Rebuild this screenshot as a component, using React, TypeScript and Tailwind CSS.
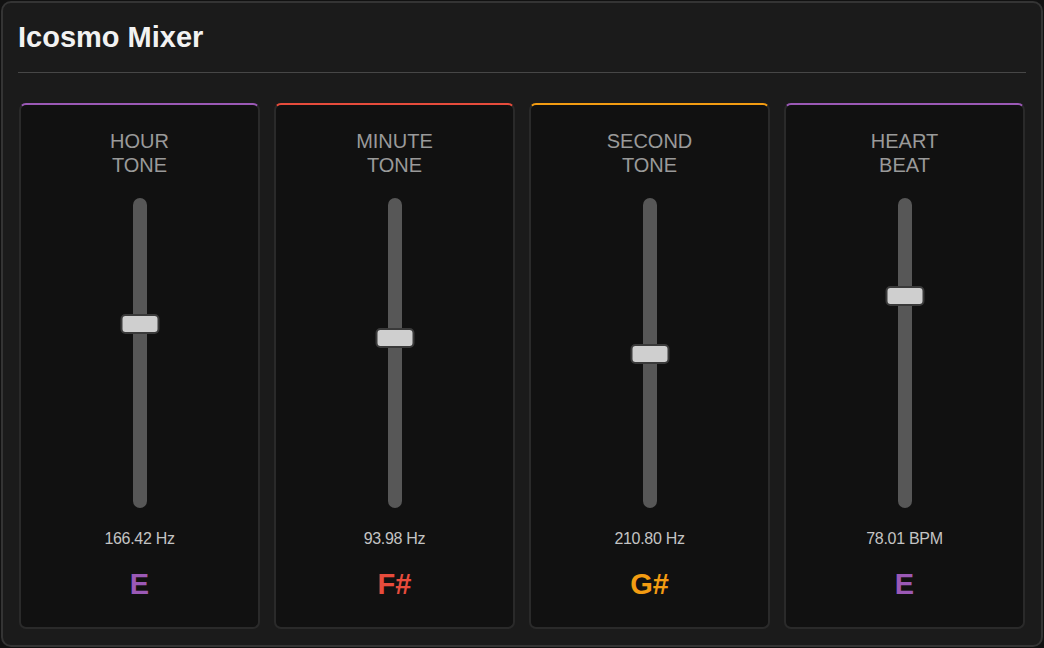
import React from 'react';

type Channel = {
  label: [string, string];
  value: string;
  note: string;
  color: string;
  accent: string;
  pos: number; // thumb offset from the top of the track, px
};

const channels: Channel[] = [
  { label: ['HOUR', 'TONE'], value: '166.42 Hz', note: 'E', color: 'text-[#9b59b6]', accent: 'border-t-[#9b59b6]', pos: 116 },
  { label: ['MINUTE', 'TONE'], value: '93.98 Hz', note: 'F#', color: 'text-[#e74c3c]', accent: 'border-t-[#e74c3c]', pos: 130 },
  { label: ['SECOND', 'TONE'], value: '210.80 Hz', note: 'G#', color: 'text-[#f39c12]', accent: 'border-t-[#f39c12]', pos: 146 },
  { label: ['HEART', 'BEAT'], value: '78.01 BPM', note: 'E', color: 'text-[#9b59b6]', accent: 'border-t-[#9b59b6]', pos: 88 },
];

function Fader({ pos }: { pos: number }) {
  return (
    <div className="relative mx-auto h-[310px] w-[14px] rounded-full bg-[#575757]">
      {/* thumb floats over the track */}
      <div
        className="absolute left-1/2 h-[20px] w-[39px] -translate-x-1/2 rounded-[5px] border-2 border-[#3a3a3a] bg-[#cfcfcf]"
        style={{ top: pos }}
      />
    </div>
  );
}

function ChannelCard({ ch }: { ch: Channel }) {
  return (
    <div className={`flex flex-col items-center rounded-[7px] border-2 border-[#2a2a2a] bg-[#111111] pt-6 ${ch.accent}`}>
      <div className="text-center text-[20px] leading-[24px] text-[#9a9a9a]">
        <div>{ch.label[0]}</div>
        <div>{ch.label[1]}</div>
      </div>
      <div className="mt-[21px]">
        <Fader pos={ch.pos} />
      </div>
      <div className="mt-[21px] text-[16px] leading-5 tracking-[-0.3px] text-[#c4c4c4]">{ch.value}</div>
      <div className={`mt-[17px] text-[29px] font-bold leading-[36px] ${ch.color}`}>{ch.note}</div>
    </div>
  );
}

export default function App() {
  return (
    <div className="h-[648px] w-[1044px] bg-[#111] p-px" style={{ fontFamily: '"Liberation Sans", Arial, sans-serif' }}>
      <div className="flex h-full flex-col rounded-[10px] border-2 border-[#343434] bg-[#1b1b1b] px-[15px] py-4">
        <div className="border-b border-[#474747] pb-[17px]">
          <h1 className="text-[29px] font-bold leading-[36px] text-[#f2f2f2]">Icosmo Mixer</h1>
        </div>
        <div className="mt-[30px] grid flex-1 grid-cols-4 gap-[14px] px-px">
          {channels.map(ch => (
            <ChannelCard key={ch.label.join(' ')} ch={ch} />
          ))}
        </div>
      </div>
    </div>
  );
}
